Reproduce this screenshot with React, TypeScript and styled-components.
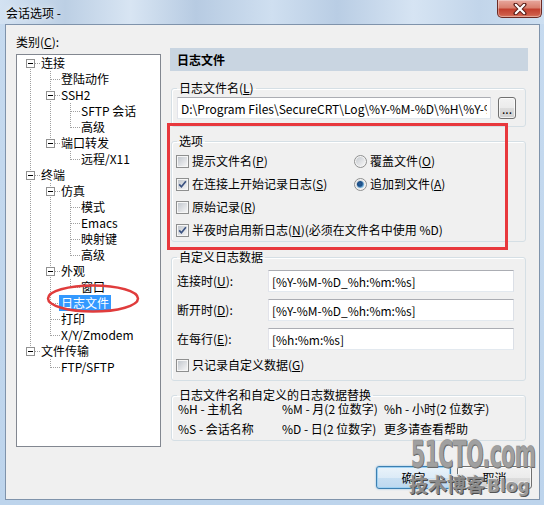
import React, { useId } from "react";
import styled, { createGlobalStyle } from "styled-components";

const FONT = `"Noto Sans CJK SC", "Liberation Sans", sans-serif`;

const GlobalStyle = createGlobalStyle`
  html, body { margin: 0; padding: 0; }
  * { text-autospace: no-autospace; }
  body {
    width: 544px; height: 505px; overflow: hidden;
    font-family: ${FONT}; font-size: 12px; color: #000;
    background: #c2d7ee;
  }
  #root { width: 544px; height: 505px; }
  u { text-underline-offset: 1px; }
`;

const Window = styled.div`
  position: relative;
  width: 544px;
  height: 505px;
  display: flex;
  flex-direction: column;
  background: linear-gradient(180deg, #c6daef 0%, #bdd4ec 100%);
  overflow: hidden;
`;

const TitleBar = styled.div`
  height: 24px;
  flex: 0 0 24px;
  display: flex;
  align-items: flex-start;
  justify-content: space-between;
  background: linear-gradient(90deg, #d3e2f2 0%, #bccfe4 12%, #d8e5f3 24%, #b7cbe2 36%, #cfdff0 50%, #b9cde4 62%, #d6e4f3 76%, #c2d5ea 88%, #cddff1 100%);
`;

const Title = styled.span`
  padding-left: 6px;
  line-height: 25px;
  font-size: 12px;
  color: #000;
  text-shadow: 0 0 6px rgba(255, 255, 255, 0.9);
`;

const CloseButton = styled.div`
  width: 45px;
  height: 18px;
  margin-right: 2px;
  box-sizing: border-box;
  border: 1px solid #6b2a24;
  border-top: none;
  border-radius: 0 0 5px 5px;
  background: linear-gradient(180deg, #e8a89e 0%, #d9806f 45%, #c2402f 55%, #cd5a47 85%, #d97a62 100%);
  box-shadow: inset 0 0 0 1px rgba(255, 255, 255, 0.35);
  display: flex;
  align-items: center;
  justify-content: center;
`;

const Client = styled.div`
  flex: 1;
  margin: 0 4px 5px 5px;
  border: 1px solid #7f93ab;
  background: #f0f0f0;
  display: flex;
  flex-direction: column;
`;

const Body = styled.div`
  display: flex;
  align-items: flex-start;
  gap: 9px;
  padding: 9px 0 0 10px;
`;

const LeftPane = styled.div`
  display: flex;
  flex-direction: column;
  gap: 4px;
`;

const PlainLabel = styled.div`
  line-height: 16px;
`;

const TreeBox = styled.div`
  width: 145px;
  height: 393px;
  box-sizing: border-box;
  border: 1px solid #828790;
  background: #fff;
  padding-left: 3px;
`;

const TreeRow = styled.div`
  display: flex;
  height: 16px;
  align-items: center;
`;

const TreeLabel = styled.span<{ $selected?: boolean }>`
  line-height: 16px;
  height: 16px;
  white-space: nowrap;
  padding: 0 ${(p) => (p.$selected ? 2 : 1)}px;
  margin-left: ${(p) => (p.$selected ? -1 : 0)}px;
  background: ${(p) => (p.$selected ? "#3399ff" : "transparent")};
  color: ${(p) => (p.$selected ? "#fff" : "#000")};
`;

const GuideSvg = styled.svg`
  display: block;
  flex: 0 0 20px;
`;

const RightPane = styled.div`
  width: 358px;
  margin-top: 14px;
  display: flex;
  flex-direction: column;
`;

const Header = styled.div`
  height: 23px;
  line-height: 23px;
  padding-left: 7px;
  background: #c9d5e1;
  font-weight: 700;
`;

const Group = styled.fieldset<{ $mt: number; $pt: number; $pb: number }>`
  margin: ${(p) => p.$mt}px 2px 0 1px;
  padding: ${(p) => p.$pt}px 9px ${(p) => p.$pb}px 5px;
  border: 1px solid #d5dfe5;
  border-radius: 3px;
  min-width: 0;
  box-shadow: inset 1px 1px 0 #fff;
`;

const Legend = styled.legend`
  padding: 0 2px;
  line-height: 14px;
  font-size: 12px;
`;

const FileRow = styled.div`
  display: flex;
  gap: 7px;
  align-items: center;
`;

const TextBox = styled.input<{ $w: number }>`
  box-sizing: border-box;
  width: ${(p) => p.$w}px;
  height: 22px;
  margin: 0;
  padding: 0 3px;
  border: 1px solid;
  border-color: #abadb3 #dbdfe6 #e3e9ef #e2e3ea;
  background: #fff;
  font-family: ${FONT};
  font-size: 12px;
  color: #000;
  outline: none;
`;

const SmallButton = styled.button`
  width: 18px;
  height: 22px;
  box-sizing: border-box;
  padding: 0 0 3px;
  margin: 0;
  border: 1px solid #707070;
  border-radius: 3px;
  background: linear-gradient(180deg, #f2f2f2 0%, #ebebeb 50%, #dddddd 50%, #cfcfcf 100%);
  box-shadow: inset 0 0 0 1px rgba(255, 255, 255, 0.7);
  font-family: ${FONT};
  font-size: 12px;
  line-height: 12px;
  display: flex;
  align-items: flex-end;
  justify-content: center;
`;

const OptionGrid = styled.div`
  display: grid;
  grid-template-columns: 178px 1fr;
  grid-auto-rows: 16px;
  row-gap: 7px;
`;

const CheckRow = styled.label<{ $span?: boolean }>`
  display: flex;
  align-items: center;
  gap: 3px;
  height: 16px;
  line-height: 16px;
  margin-left: -1px;
  white-space: nowrap;
  grid-column: ${(p) => (p.$span ? "1 / -1" : "auto")};
`;

const CheckText = styled.span`
  line-height: 16px;
  white-space: nowrap;
`;

const CustomGrid = styled.div`
  display: grid;
  grid-template-columns: 91px 246px;
  row-gap: 7px;
  align-items: center;
`;

const FieldLabel = styled.span`
  line-height: 16px;
  white-space: nowrap;
`;

const HelpGrid = styled.div`
  display: grid;
  grid-template-columns: 104px 102px 1fr;
  grid-auto-rows: 14px;
  row-gap: 6px;
  padding-left: 1px;
  line-height: 14px;
  white-space: nowrap;
`;

const ButtonRow = styled.div`
  display: flex;
  justify-content: flex-end;
  gap: 6px;
  margin-top: 19px;
  padding-right: 7px;
`;

const DialogButton = styled.button<{ $default?: boolean }>`
  width: 75px;
  height: 23px;
  box-sizing: border-box;
  margin: 0;
  padding: 0;
  border: 1px solid ${(p) => (p.$default ? "#3c7fb1" : "#707070")};
  border-radius: 3px;
  background: ${(p) =>
    p.$default
      ? "linear-gradient(180deg, #eaf3fa 0%, #dcebf7 50%, #c9e0f3 50%, #bdd8ef 100%)"
      : "linear-gradient(180deg, #f2f2f2 0%, #ebebeb 50%, #dddddd 50%, #cfcfcf 100%)"};
  box-shadow: ${(p) =>
    p.$default
      ? "inset 0 0 0 1px #9fd1f2, 0 0 2px #7fb6e0"
      : "inset 0 0 0 1px rgba(255,255,255,0.7)"};
  font-family: ${FONT};
  font-size: 12px;
  color: #000;
`;

const Overlay = styled.div`
  position: absolute;
  inset: 0;
  pointer-events: none;
`;

const RedFrame = styled.div`
  position: absolute;
  left: 167px;
  top: 123px;
  width: 341px;
  height: 127px;
  box-sizing: border-box;
  border: 3px solid #e8383d;
`;

const EllipseSvg = styled.svg`
  position: absolute;
  left: 45px;
  top: 282px;
`;

const MarkMain = styled.div`
  position: absolute;
  left: 411px;
  top: 435px;
  font-family: "DejaVu Sans Condensed", "DejaVu Sans", sans-serif;
  font-weight: 700;
  font-size: 38px;
  line-height: 38px;
  letter-spacing: -1px;
  color: #a0a0a0;
  transform: scaleX(0.6);
  transform-origin: left top;
  -webkit-text-stroke: 0.6px #8a8a8a;
  text-shadow: 1px 1px 0 #5c5c5c, -1px -1px 0 #ececec;
  white-space: nowrap;
`;

const MarkCn = styled.div`
  position: absolute;
  left: 409px;
  top: 474px;
  font-family: ${FONT};
  font-weight: 700;
  font-size: 19px;
  line-height: 20px;
  color: #8c8c8c;
  text-shadow: 1px 1px 0 #4a4a4a, -1px -1px 0 #e0e0e0;
  white-space: nowrap;
`;

const MarkBlog = styled.div`
  position: absolute;
  left: 487px;
  top: 476px;
  font-family: "DejaVu Sans", sans-serif;
  font-weight: 700;
  font-size: 17px;
  line-height: 20px;
  color: #9a9a9a;
  text-shadow: 1px 1px 0 #555, -1px -1px 0 #e8e8e8;
  white-space: nowrap;
`;

/* ---------- icons ---------- */

const DOT = "#a0a0a0";

function Pipe() {
  return (
    <GuideSvg width="20" height="16" viewBox="0 0 20 16" shapeRendering="crispEdges">
      <line x1="10.5" y1="0" x2="10.5" y2="16" stroke={DOT} strokeDasharray="1 1" />
    </GuideSvg>
  );
}

function Blank() {
  return <GuideSvg width="20" height="16" viewBox="0 0 20 16" />;
}

function Connector({ last, box, first }: { last: boolean; box: boolean; first: boolean }) {
  return (
    <GuideSvg width="20" height="16" viewBox="0 0 20 16" shapeRendering="crispEdges">
      {!first && (
        <line x1="10.5" y1="0" x2="10.5" y2={box ? 4 : 9} stroke={DOT} strokeDasharray="1 1" />
      )}
      {!last && (
        <line x1="10.5" y1={box ? 14 : 8} x2="10.5" y2="16" stroke={DOT} strokeDasharray="1 1" />
      )}
      <line x1={box ? 15 : 11} y1="8.5" x2="20" y2="8.5" stroke={DOT} strokeDasharray="1 1" />
      {box && (
        <>
          <rect x="6.5" y="4.5" width="8" height="8" fill="#fff" stroke="#919191" />
          <line x1="8" y1="8.5" x2="13" y2="8.5" stroke="#000" />
        </>
      )}
    </GuideSvg>
  );
}

function cleanId(s: string) {
  return s.replace(/[^a-zA-Z0-9_-]/g, "");
}

function CheckBox({ checked }: { checked?: boolean }) {
  const id = "cb" + cleanId(useId());
  return (
    <svg width="13" height="13" viewBox="0 0 13 13" style={{ flex: "0 0 13px" }}>
      <defs>
        <linearGradient id={id} x1="0" y1="0" x2="1" y2="1">
          <stop offset="0" stopColor="#c3c8ce" />
          <stop offset="1" stopColor="#f4f4f5" />
        </linearGradient>
      </defs>
      <rect x="0.5" y="0.5" width="12" height="12" fill="#f6f6f6" stroke="#8e8f8f" />
      <rect x="2" y="2" width="9" height="9" fill={`url(#${id})`} />
      {checked && (
        <path d="M3.2 6.4 L5.4 8.8 L9.9 3.3" fill="none" stroke="#3b5281" strokeWidth="1.7" />
      )}
    </svg>
  );
}

function Radio({ checked }: { checked?: boolean }) {
  const id = "rb" + cleanId(useId());
  return (
    <svg width="13" height="13" viewBox="0 0 13 13" style={{ flex: "0 0 13px" }}>
      <defs>
        <linearGradient id={id + "a"} x1="0" y1="0" x2="1" y2="1">
          <stop offset="0" stopColor="#c6cacf" />
          <stop offset="1" stopColor="#f6f6f6" />
        </linearGradient>
        <radialGradient id={id + "b"} cx="0.4" cy="0.4" r="0.6">
          <stop offset="0" stopColor="#2b5d95" />
          <stop offset="0.55" stopColor="#1a4d86" />
          <stop offset="1" stopColor="#8cc9ef" />
        </radialGradient>
      </defs>
      <circle cx="6.5" cy="6.5" r="6" fill="#f4f4f4" stroke="#8e8f8f" />
      <circle cx="6.5" cy="6.5" r="4.5" fill={`url(#${id}a)`} />
      {checked && <circle cx="6.5" cy="6.5" r="3.6" fill={`url(#${id}b)`} />}
    </svg>
  );
}

/* ---------- data ---------- */

type Node = { label: string; children?: Node[]; selected?: boolean };

const tree: Node[] = [
  {
    label: "连接",
    children: [
      { label: "登陆动作" },
      { label: "SSH2", children: [{ label: "SFTP 会话" }, { label: "高级" }] },
      { label: "端口转发", children: [{ label: "远程/X11" }] },
    ],
  },
  {
    label: "终端",
    children: [
      {
        label: "仿真",
        children: [{ label: "模式" }, { label: "Emacs" }, { label: "映射键" }, { label: "高级" }],
      },
      { label: "外观", children: [{ label: "窗口" }] },
      { label: "日志文件", selected: true },
      { label: "打印" },
      { label: "X/Y/Zmodem" },
    ],
  },
  { label: "文件传输", children: [{ label: "FTP/SFTP" }] },
];

type Row = {
  label: string;
  guides: boolean[];
  last: boolean;
  box: boolean;
  first: boolean;
  selected: boolean;
};

function flatten(nodes: Node[], guides: boolean[], out: Row[], root: boolean) {
  nodes.forEach((n, i) => {
    const last = i === nodes.length - 1;
    out.push({
      label: n.label,
      guides,
      last,
      box: !!n.children,
      first: root && i === 0,
      selected: !!n.selected,
    });
    if (n.children) flatten(n.children, [...guides, !last], out, false);
  });
  return out;
}

const rows = flatten(tree, [], [], true);

/* ---------- app ---------- */

export default function App() {
  return (
    <>
      <GlobalStyle />
      <Window>
        <TitleBar>
          <Title>会话选项 -</Title>
          <CloseButton>
            <svg width="14" height="12" viewBox="0 0 14 12">
              <path
                d="M2.5 1.5 L11.5 10.5 M11.5 1.5 L2.5 10.5"
                stroke="#5a1d18"
                strokeWidth="4"
                strokeLinecap="round"
              />
              <path
                d="M2.8 1.8 L11.2 10.2 M11.2 1.8 L2.8 10.2"
                stroke="#fff"
                strokeWidth="2.2"
                strokeLinecap="round"
              />
            </svg>
          </CloseButton>
        </TitleBar>
        <Client>
          <Body>
            <LeftPane>
              <PlainLabel>
                类别(<u>C</u>):
              </PlainLabel>
              <TreeBox>
                {rows.map((r, i) => (
                  <TreeRow key={i}>
                    {r.guides.map((g, j) => (g ? <Pipe key={j} /> : <Blank key={j} />))}
                    <Connector last={r.last} box={r.box} first={r.first} />
                    <TreeLabel $selected={r.selected}>{r.label}</TreeLabel>
                  </TreeRow>
                ))}
              </TreeBox>
            </LeftPane>
            <RightPane>
              <Header>日志文件</Header>
              <Group $mt={10} $pt={2} $pb={7}>
                <Legend>
                  日志文件名(<u>L</u>)
                </Legend>
                <FileRow>
                  <TextBox
                    $w={315}
                    readOnly
                    value={"D:\\Program Files\\SecureCRT\\Log\\%Y-%M-%D\\%H\\%Y-%M-%D_%h-%m-%s.log"}
                  />
                  <SmallButton>...</SmallButton>
                </FileRow>
              </Group>
              <Group $mt={7} $pt={5} $pb={3}>
                <Legend>选项</Legend>
                <OptionGrid>
                  <CheckRow>
                    <CheckBox />
                    <CheckText>
                      提示文件名(<u>P</u>)
                    </CheckText>
                  </CheckRow>
                  <CheckRow>
                    <Radio />
                    <CheckText>
                      覆盖文件(<u>O</u>)
                    </CheckText>
                  </CheckRow>
                  <CheckRow>
                    <CheckBox checked />
                    <CheckText>
                      在连接上开始记录日志(<u>S</u>)
                    </CheckText>
                  </CheckRow>
                  <CheckRow>
                    <Radio checked />
                    <CheckText>
                      追加到文件(<u>A</u>)
                    </CheckText>
                  </CheckRow>
                  <CheckRow $span>
                    <CheckBox />
                    <CheckText>
                      原始记录(<u>R</u>)
                    </CheckText>
                  </CheckRow>
                  <CheckRow $span>
                    <CheckBox checked />
                    <CheckText>
                      半夜时启用新日志(<u>N</u>)(必须在文件名中使用 %D)
                    </CheckText>
                  </CheckRow>
                </OptionGrid>
              </Group>
              <Group $mt={8} $pt={6} $pb={7}>
                <Legend>自定义日志数据</Legend>
                <CustomGrid>
                  <FieldLabel>
                    连接时(<u>U</u>):
                  </FieldLabel>
                  <TextBox $w={246} readOnly value="[%Y-%M-%D_%h:%m:%s]" />
                  <FieldLabel>
                    断开时(<u>D</u>):
                  </FieldLabel>
                  <TextBox $w={246} readOnly value="[%Y-%M-%D_%h:%m:%s]" />
                  <FieldLabel>
                    在每行(<u>E</u>):
                  </FieldLabel>
                  <TextBox $w={246} readOnly value="[%h:%m:%s]" />
                  <CheckRow $span>
                    <CheckBox />
                    <CheckText>
                      只记录自定义数据(<u>G</u>)
                    </CheckText>
                  </CheckRow>
                </CustomGrid>
              </Group>
              <Group $mt={7} $pt={0} $pb={4}>
                <Legend>日志文件名和自定义的日志数据替换</Legend>
                <HelpGrid>
                  <span>%H - 主机名</span>
                  <span>%M - 月(2 位数字)</span>
                  <span>%h - 小时(2 位数字)</span>
                  <span>%S - 会话名称</span>
                  <span>%D - 日(2 位数字)</span>
                  <span>更多请查看帮助</span>
                </HelpGrid>
              </Group>
            </RightPane>
          </Body>
          <ButtonRow>
            <DialogButton $default>确定</DialogButton>
            <DialogButton>取消</DialogButton>
          </ButtonRow>
        </Client>
        <Overlay>
          <RedFrame />
          <EllipseSvg width="96" height="34" viewBox="0 0 96 34">
            <ellipse cx="48" cy="16.5" rx="45" ry="13" fill="none" stroke="#e03c3c" strokeWidth="2.5" />
          </EllipseSvg>
          <MarkMain>51CTO.com</MarkMain>
          <MarkCn>技术博客</MarkCn>
          <MarkBlog>Blog</MarkBlog>
        </Overlay>
      </Window>
    </>
  );
}
